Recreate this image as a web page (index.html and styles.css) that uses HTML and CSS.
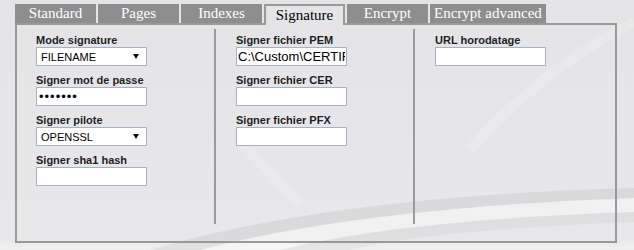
FILE: index.html
```html
<!DOCTYPE html>
<html lang="fr">

<head>
    <meta charset="UTF-8">
    <meta name="viewport" content="width=device-width, initial-scale=1.0">
    <title>Signature</title>
    <link rel="stylesheet" href="styles.css">
</head>

<body>
    <div class="tabs">
        <div class="tab">Standard</div>
        <div class="tab">Pages</div>
        <div class="tab">Indexes</div>
        <div class="tab active">Signature</div>
        <div class="tab">Encrypt</div>
        <div class="tab">Encrypt advanced</div>
    </div>
    <div class="panel">
        <div class="col first">
            <div class="field">
                <label>Mode signature</label>
                <div class="select-wrap">
                    <select class="box select">
                        <option>FILENAME</option>
                    </select>
                </div>
            </div>
            <div class="field">
                <label>Signer mot de passe</label>
                <input class="box pass" type="password" value="1234567">
            </div>
            <div class="field">
                <label>Signer pilote</label>
                <div class="select-wrap">
                    <select class="box select">
                        <option>OPENSSL</option>
                    </select>
                </div>
            </div>
            <div class="field">
                <label>Signer sha1 hash</label>
                <input class="box" type="text" value="">
            </div>
        </div>
        <div class="col">
            <div class="field">
                <label>Signer fichier PEM</label>
                <input class="box path" type="text" value="C:\Custom\CERTIFICATS\cert.pem">
            </div>
            <div class="field">
                <label>Signer fichier CER</label>
                <input class="box" type="text" value="">
            </div>
            <div class="field">
                <label>Signer fichier PFX</label>
                <input class="box" type="text" value="">
            </div>
        </div>
        <div class="col last">
            <div class="field">
                <label>URL horodatage</label>
                <input class="box" type="text" value="">
            </div>
        </div>
    </div>
</body>

</html>
```

FILE: styles.css
```css
* {
    padding: 0px;
    margin: 0px;
    box-sizing: border-box;
}
html,body{
    width: 100%;
    height: 100%;
}
body{
    padding-top: 4px;
    font-family: "Liberation Sans", Arial, sans-serif;
    background-color: #e6e6e8;
    /* fond avec la vague grise */
    background-image:
        url("data:image/svg+xml,%3Csvg xmlns='http://www.w3.org/2000/svg' width='634' height='250'%3E%3Cpath d='M150 250 Q330 196 634 188 L634 198 Q360 208 200 250 Z' fill='black' fill-opacity='0.06'/%3E%3Cpath d='M200 250 Q360 208 634 198 L634 212 Q400 220 280 250 Z' fill='white' fill-opacity='0.4'/%3E%3Cpath d='M280 250 Q400 220 634 212 L634 222 Q430 230 350 250 Z' fill='black' fill-opacity='0.035'/%3E%3Cpath d='M634 22 Q540 70 470 150' stroke='white' stroke-opacity='0.18' stroke-width='10' fill='none'/%3E%3Cpath d='M238 140 Q270 170 300 205' stroke='white' stroke-opacity='0.15' stroke-width='10' fill='none'/%3E%3C/svg%3E"),
        linear-gradient(to bottom, #e4e4e6 0px, #e8e8ea 240px, #efefef 246px, #efefef 250px);
    background-repeat: no-repeat;
    overflow: hidden;
}

/* onglets */
.tabs{
    position: relative;
    z-index: 1;
    display: flex;
    gap: 2px;
    height: 21px;
    margin-left: 15px;
    margin-bottom: -2px;
}
.tab{
    min-width: 81px;
    height: 19px;
    padding: 0px 4px;
    background-color: #8e8e8e;
    color: white;
    font-family: "Liberation Serif", "Times New Roman", serif;
    font-size: 15px;
    line-height: 19px;
    text-align: center;
    white-space: nowrap;
}
.tab.active{
    height: 21px;
    background-color: #e5e5e7;
    color: black;
    border: 2px solid #999;
    border-bottom: none;
    line-height: 18px;
}

/* panneau */
.panel{
    display: flex;
    align-items: flex-start;
    width: 602px;
    height: 220px;
    margin-left: 15px;
    border: 2px solid #999;
}
.col{
    width: 199px;
    height: 195px;
    margin-top: 4px;
    padding: 5px 0px 0px 20px;
    border-right: 2px solid #9b9b9b;
}
.col.first{
    width: 199px;
    padding-left: 19px;
}
.col.last{
    flex: 1;
    border-right: none;
}

.field{
    margin-bottom: 8px;
}
.field label{
    display: block;
    height: 13px;
    font-size: 11px;
    font-weight: bold;
    line-height: 13px;
    color: #1e1e24;
}
.box{
    display: block;
    width: 111px;
    height: 19px;
    border: 1px solid #a3b3c6;
    background-color: white;
    outline: none;
    font-family: "Liberation Sans", Arial, sans-serif;
    font-size: 13px;
    color: black;
    padding: 0px 2px;
}
.path{
    padding: 0px 1px;
}
.pass{
    font-size: 13px;
    letter-spacing: 1px;
}

.select-wrap{
    position: relative;
    width: 111px;
}
.select{
    appearance: none;
    -webkit-appearance: none;
    font-size: 11px;
    padding: 0px 4px;
    border-radius: 0px;
}
.select-wrap::after{
    content: "";
    position: absolute;
    right: 8px;
    top: 7px;
    border-left: 3px solid transparent;
    border-right: 3px solid transparent;
    border-top: 5px solid #111;
    pointer-events: none;
}
```
